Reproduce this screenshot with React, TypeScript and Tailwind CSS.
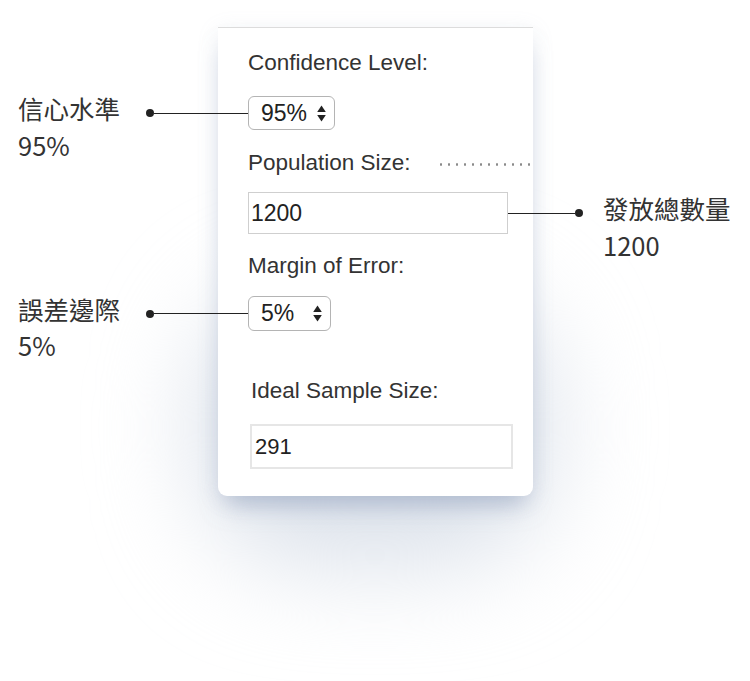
import React from 'react';

const SANS = "font-['Liberation_Sans',Arial,sans-serif]";
const CJK = "font-['Noto_Sans_CJK_TC','Noto_Sans',sans-serif]";

const UpDown = () => (
  <svg width="9" height="17" viewBox="0 0 9 17" className="shrink-0">
    <path d="M4.5 0.5 L8.8 7 L0.2 7 Z" fill="#222" />
    <path d="M4.5 16.5 L8.8 10 L0.2 10 Z" fill="#222" />
  </svg>
);

interface CalloutProps {
  title: string;
  value: string;
  side: 'left' | 'right';
  rowHeight: number;
}

const Callout = ({ title, value, side, rowHeight }: CalloutProps) => {
  const text = (
    <p
      className={`${CJK} whitespace-nowrap text-[25.5px] leading-[36.5px] text-[#333]`}
      style={{ marginTop: rowHeight / 2 - 23 }}
    >
      {title}
      <br />
      {value}
    </p>
  );
  if (side === 'left') {
    return (
      <div className="absolute right-full top-0 flex w-[230px] items-start">
        <div className="w-[128px] shrink-0">{text}</div>
        <div className="flex flex-1 items-center" style={{ height: rowHeight }}>
          <span className="h-[8px] w-[8px] rounded-full bg-[#222]" />
          <span className="h-px flex-1 bg-[#222]" />
        </div>
      </div>
    );
  }
  return (
    <div className="absolute left-full top-0 flex items-start">
      <div className="flex w-[75px] items-center" style={{ height: rowHeight }}>
        <span className="h-px flex-1 bg-[#222]" />
        <span className="h-[8px] w-[8px] rounded-full bg-[#222]" />
      </div>
      <div className="ml-[20px] w-[150px]">{text}</div>
    </div>
  );
};

const App = () => {
  return (
    <div className="relative isolate h-[681px] w-[750px] overflow-hidden bg-white">
      {/* soft haze under the card */}
      <div className="absolute left-[200px] top-[290px] -z-10 h-[275px] w-[350px] rounded-[110px] bg-[#dbe1ea] blur-[50px]" />

      <div className="pl-[218px] pt-[27px]">
        <div
          className={`${SANS} relative w-[315px] rounded-b-[9px] border-t border-[#dcdcdc] bg-white pb-[27px] pl-[30px] pr-[2px] pt-[22px] text-[#333] shadow-[0_16px_24px_-8px_rgba(140,157,186,0.55),0_4px_22px_rgba(150,165,190,0.14)]`}
        >
          <p className="h-[26px] text-[22.5px] leading-[26px]">Confidence Level:</p>

          <div className="relative mt-[20px] w-fit">
            <div className="flex h-[34px] w-[87px] items-center gap-[10px] rounded-[6px] border border-[#b4b4b4] bg-white pl-[12px] text-[23px] text-[#222]">
              <span>95%</span>
              <UpDown />
            </div>
            <Callout title="信心水準" value="95%" side="left" rowHeight={34} />
          </div>

          <div className="mt-[20px] flex h-[26px] items-center">
            <p className="text-[22.5px] leading-[26px]">Population Size:</p>
            <span className="ml-[26px] mt-[2px] h-[3px] flex-1 bg-[radial-gradient(circle,#8a8a8a_1px,transparent_1.4px)] bg-[length:8px_3px]" />
          </div>

          <div className="relative mt-[16px] w-fit">
            <div className="flex h-[42px] w-[260px] items-center border-[1.5px] border-[#cfcfcf] bg-white pl-[2px] text-[23px] text-[#222]">
              1200
            </div>
            <Callout title="發放總數量" value="1200" side="right" rowHeight={42} />
          </div>

          <p className="mt-[19px] h-[26px] text-[22.5px] leading-[26px]">Margin of Error:</p>

          <div className="relative mt-[17px] w-fit">
            <div className="flex h-[35px] w-[83px] items-center rounded-[6px] border border-[#b4b4b4] bg-white pl-[12px] pr-[8px] text-[23px] text-[#222]">
              <span className="flex-1">5%</span>
              <UpDown />
            </div>
            <Callout title="誤差邊際" value="5%" side="left" rowHeight={35} />
          </div>

          <p className="ml-[3px] mt-[47px] h-[26px] text-[22.5px] leading-[26px]">Ideal Sample Size:</p>

          <div className="ml-[2px] mt-[20px] flex h-[45px] w-[263px] items-center border-2 border-[#e6e6e6] bg-white pl-[3px] text-[22px] text-[#222]">
            291
          </div>
        </div>
      </div>
    </div>
  );
};

export default App;
